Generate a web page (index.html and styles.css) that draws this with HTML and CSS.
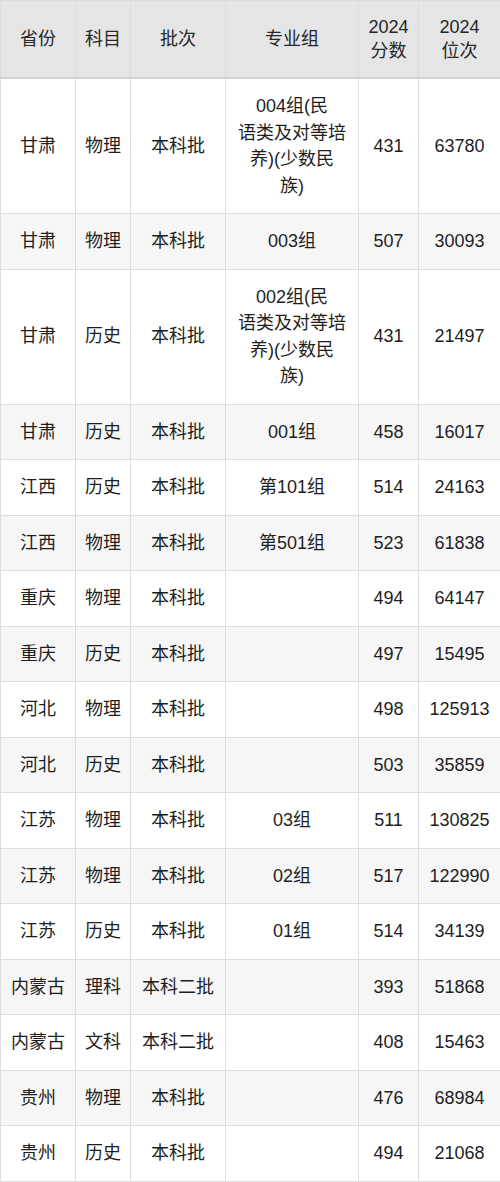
FILE: index.html
```html
<!DOCTYPE html>
<html lang="zh-CN">
<head>
<meta charset="utf-8">
<link rel="stylesheet" href="styles.css">
</head>
<body>
<table class="score-table">
  <colgroup>
    <col class="c1"><col class="c2"><col class="c3"><col class="c4"><col class="c5"><col class="c6">
  </colgroup>
  <thead>
    <tr><th>省份</th><th>科目</th><th>批次</th><th>专业组</th><th>2024<br>分数</th><th>2024<br>位次</th></tr>
  </thead>
  <tbody>
    <tr><td>甘肃</td><td>物理</td><td>本科批</td><td>004组(民<br>语类及对等培<br>养)(少数民<br>族)</td><td>431</td><td>63780</td></tr>
    <tr><td>甘肃</td><td>物理</td><td>本科批</td><td>003组</td><td>507</td><td>30093</td></tr>
    <tr><td>甘肃</td><td>历史</td><td>本科批</td><td>002组(民<br>语类及对等培<br>养)(少数民<br>族)</td><td>431</td><td>21497</td></tr>
    <tr><td>甘肃</td><td>历史</td><td>本科批</td><td>001组</td><td>458</td><td>16017</td></tr>
    <tr><td>江西</td><td>历史</td><td>本科批</td><td>第101组</td><td>514</td><td>24163</td></tr>
    <tr><td>江西</td><td>物理</td><td>本科批</td><td>第501组</td><td>523</td><td>61838</td></tr>
    <tr><td>重庆</td><td>物理</td><td>本科批</td><td></td><td>494</td><td>64147</td></tr>
    <tr><td>重庆</td><td>历史</td><td>本科批</td><td></td><td>497</td><td>15495</td></tr>
    <tr><td>河北</td><td>物理</td><td>本科批</td><td></td><td>498</td><td>125913</td></tr>
    <tr><td>河北</td><td>历史</td><td>本科批</td><td></td><td>503</td><td>35859</td></tr>
    <tr><td>江苏</td><td>物理</td><td>本科批</td><td>03组</td><td>511</td><td>130825</td></tr>
    <tr><td>江苏</td><td>物理</td><td>本科批</td><td>02组</td><td>517</td><td>122990</td></tr>
    <tr><td>江苏</td><td>历史</td><td>本科批</td><td>01组</td><td>514</td><td>34139</td></tr>
    <tr><td>内蒙古</td><td>理科</td><td>本科二批</td><td></td><td>393</td><td>51868</td></tr>
    <tr><td>内蒙古</td><td>文科</td><td>本科二批</td><td></td><td>408</td><td>15463</td></tr>
    <tr><td>贵州</td><td>物理</td><td>本科批</td><td></td><td>476</td><td>68984</td></tr>
    <tr><td>贵州</td><td>历史</td><td>本科批</td><td></td><td>494</td><td>21068</td></tr>
  </tbody>
</table>
</body>
</html>
```

FILE: styles.css
```css
html, body {
  margin: 0;
  padding: 0;
  background: #ffffff;
}

.score-table {
  width: 500px;
  border-collapse: collapse;
  table-layout: fixed;
  font-family: "Liberation Sans", "Noto Sans CJK SC", sans-serif;
  font-size: 18px;
  color: #1e1e1e;
}

.c1 { width: 75px; }
.c2 { width: 55px; }
.c3 { width: 95px; }
.c4 { width: 133px; }
.c5 { width: 60px; }
.c6 { width: 82px; }

.score-table th,
.score-table td {
  border: 1px solid #dddddd;
  text-align: center;
  vertical-align: middle;
  padding: 14px 2px;
  font-weight: normal;
}

.score-table th {
  background: #e5e5e5;
  height: 48px;
  padding: 14px 2px;
  line-height: 24px;
  color: #262626;
  border-bottom: 2px solid #d2d2d2;
}

.score-table td {
  line-height: 26.5px;
}

.score-table tbody tr:nth-child(even) td {
  background: #f6f6f6;
}
```
